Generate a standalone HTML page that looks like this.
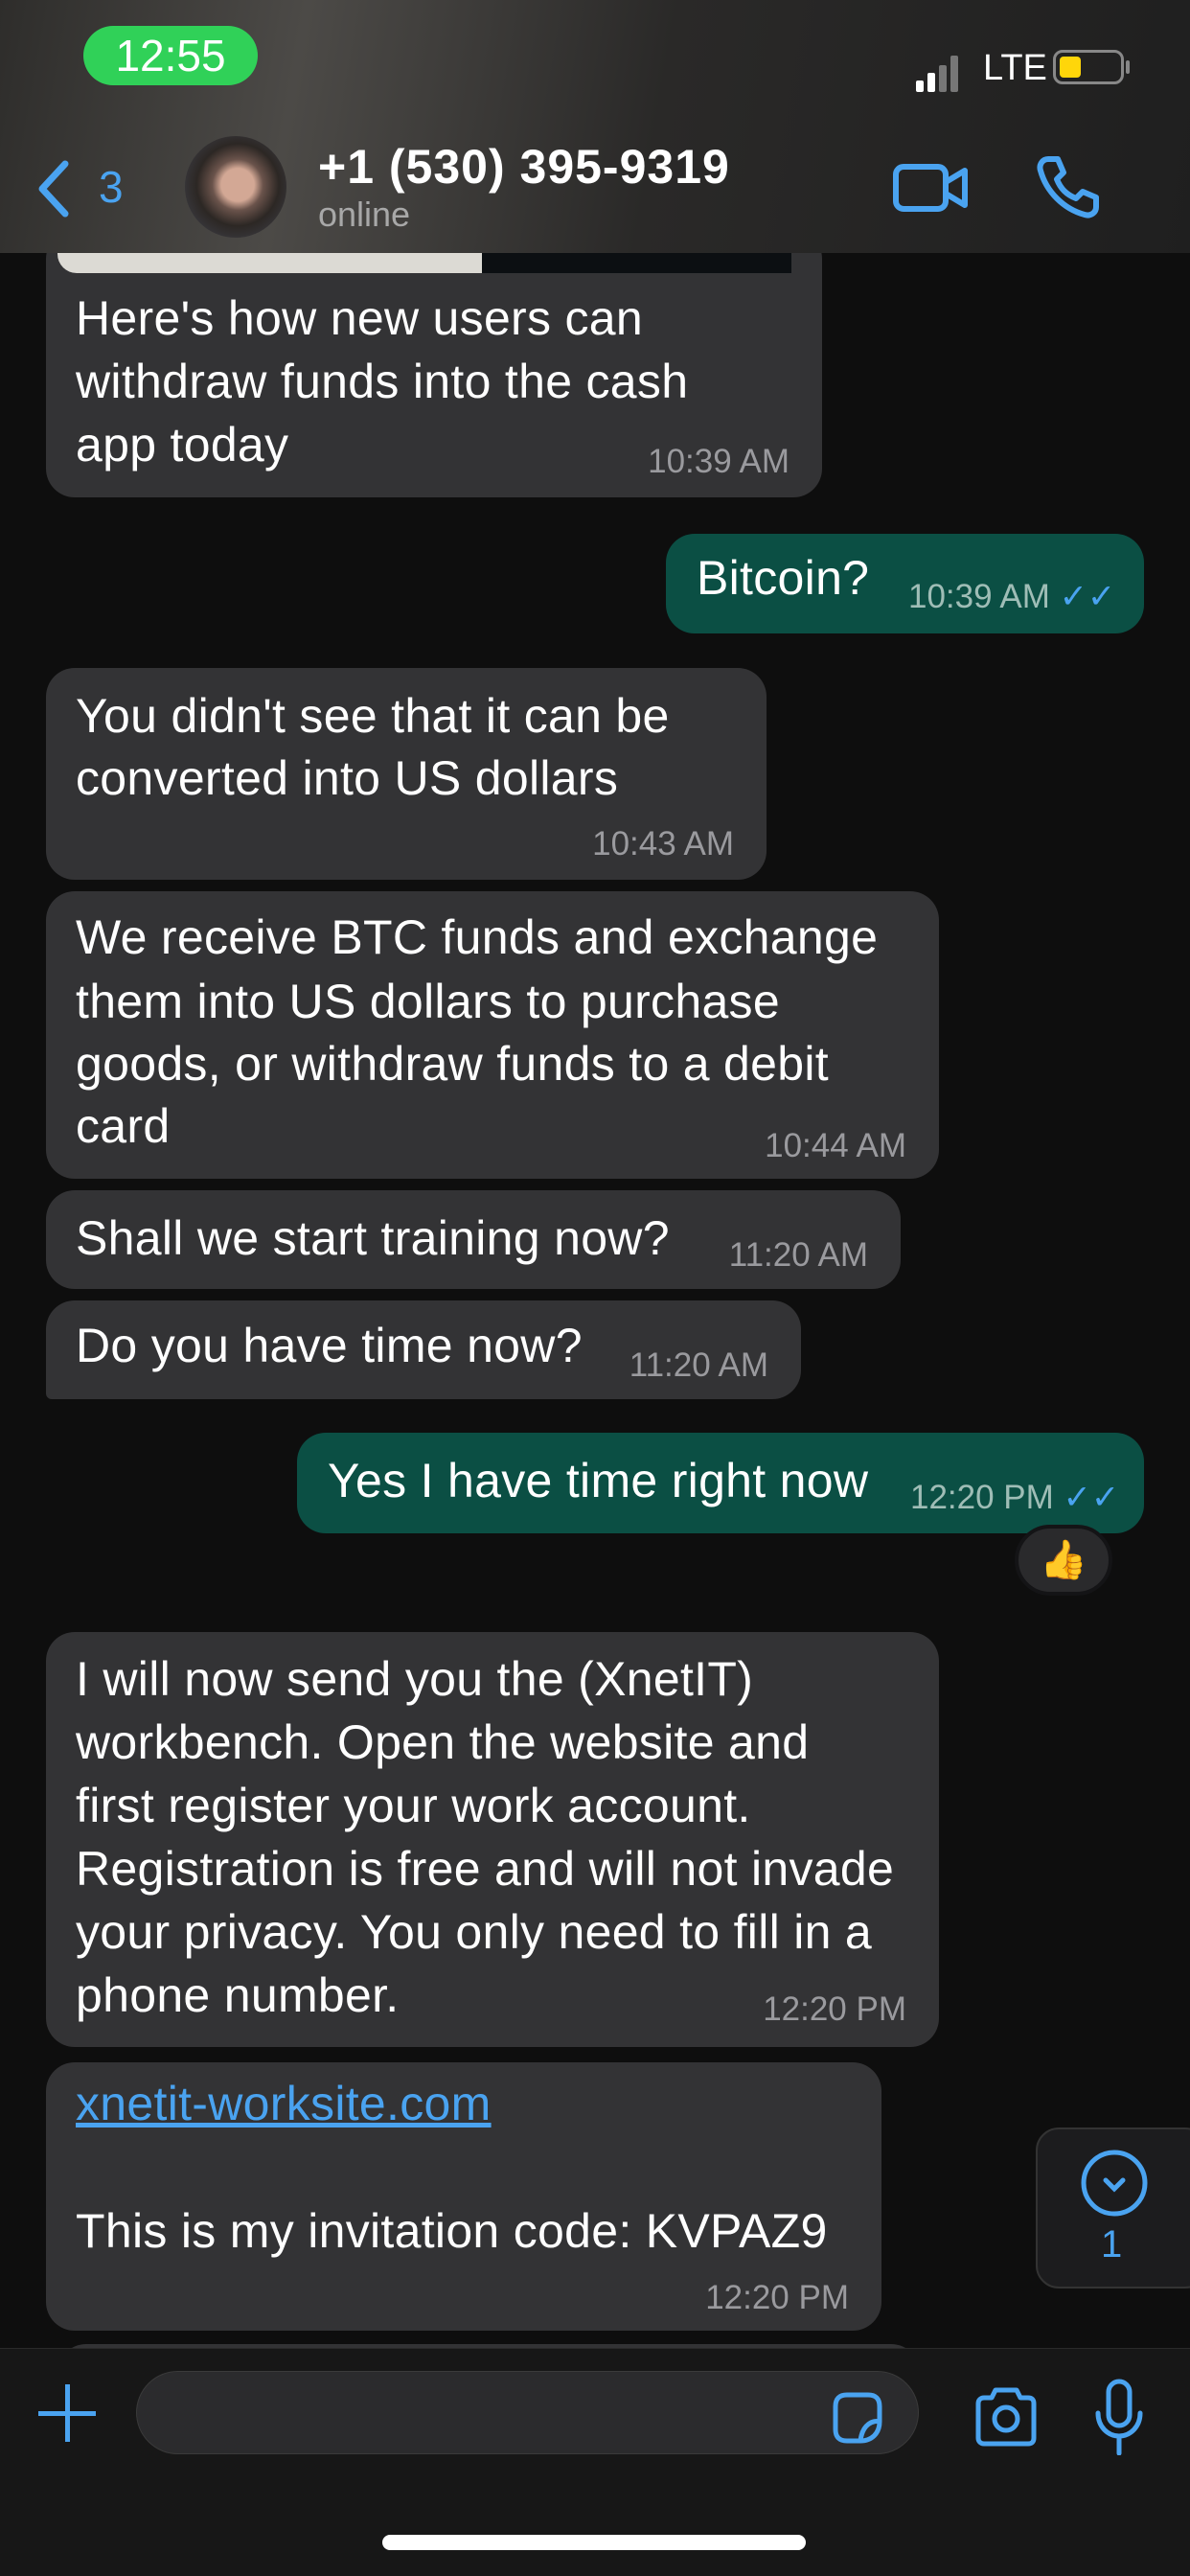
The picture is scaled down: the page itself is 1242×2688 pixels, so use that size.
<!DOCTYPE html>
<html><head><meta charset="utf-8"><style>
*{margin:0;padding:0;box-sizing:border-box}
body{width:1242px;height:2688px;background:#0e0e0e;position:relative;overflow:hidden;font-family:"Liberation Sans",sans-serif;color:#fff}
.a{position:absolute}
.b{position:absolute;background:#333335;border-radius:30px}
.o{background:#0b4f44}
.l{position:absolute;left:31px;font-size:50px;line-height:66px;white-space:nowrap;letter-spacing:0.3px}
.t{position:absolute;font-size:35px;color:#9a9a9e;white-space:nowrap;letter-spacing:0px}
.o .t{color:#9fbdb6}
</style></head><body>
<div class="b" style="left:48px;top:240px;width:810px;height:279px">
 <div class="a" style="left:12px;top:24px;width:443px;height:21px;background:#dcdad4;border-radius:0 0 0 20px"></div>
 <div class="a" style="left:455px;top:24px;width:323px;height:21px;background:#0c0f12"></div>
 <div class="l" style="top:59px">Here's how new users can</div>
 <div class="l" style="top:125px">withdraw funds into the cash</div>
 <div class="l" style="top:191px">app today</div>
 <div class="t" style="right:34px;top:222px">10:39 AM</div>
</div>
<div class="b o" style="left:695px;top:557px;width:499px;height:104px">
 <div class="l" style="top:13px;left:32px">Bitcoin?</div>
 <div class="t" style="left:253px;top:46px">10:39 AM <span style="color:#4aa3f0">✓✓</span></div>
</div>
<div class="b" style="left:48px;top:697px;width:752px;height:221px">
 <div class="l" style="top:17px">You didn't see that it can be</div>
 <div class="l" style="top:82px">converted into US dollars</div>
 <div class="t" style="right:34px;top:164px">10:43 AM</div>
</div>
<div class="b" style="left:48px;top:930px;width:932px;height:300px">
 <div class="l" style="top:15px">We receive BTC funds and exchange</div>
 <div class="l" style="top:82px">them into US dollars to purchase</div>
 <div class="l" style="top:147px">goods, or withdraw funds to a debit</div>
 <div class="l" style="top:212px">card</div>
 <div class="t" style="right:34px;top:246px">10:44 AM</div>
</div>
<div class="b" style="left:48px;top:1242px;width:892px;height:103px">
 <div class="l" style="top:17px">Shall we start training now?</div>
 <div class="t" style="right:34px;top:48px">11:20 AM</div>
</div>
<div class="b" style="left:48px;top:1357px;width:788px;height:103px;border-bottom-left-radius:6px">
 <div class="l" style="top:14px">Do you have time now?</div>
 <div class="t" style="right:34px;top:48px">11:20 AM</div>
</div>
<div class="b o" style="left:310px;top:1495px;width:884px;height:105px">
 <div class="l" style="top:17px;left:32px">Yes I have time right now</div>
 <div class="t" style="left:640px;top:48px">12:20 PM <span style="color:#4aa3f0">✓✓</span></div>
</div>
<div class="a" style="left:1059px;top:1591px;width:102px;height:74px;border-radius:37px;background:#2a2a2c;border:4px solid #141416;font-size:40px;text-align:center;line-height:66px">👍</div>
<div class="b" style="left:48px;top:1703px;width:932px;height:433px">
 <div class="l" style="top:16px">I will now send you the (XnetIT)</div>
 <div class="l" style="top:82px">workbench. Open the website and</div>
 <div class="l" style="top:148px">first register your work account.</div>
 <div class="l" style="top:214px">Registration is free and will not invade</div>
 <div class="l" style="top:280px">your privacy. You only need to fill in a</div>
 <div class="l" style="top:346px">phone number.</div>
 <div class="t" style="right:34px;top:374px">12:20 PM</div>
</div>
<div class="b" style="left:48px;top:2152px;width:872px;height:280px">
 <div class="l" style="top:10px;color:#4aa3f0;text-decoration:underline">xnetit-worksite.com</div>
 <div class="l" style="top:143px">This is my invitation code: KVPAZ9</div>
 <div class="t" style="right:34px;top:226px">12:20 PM</div>
</div>
<div class="b" style="left:60px;top:2446px;width:900px;height:60px"></div>
<div class="a" style="left:1081px;top:2220px;width:180px;height:168px;background:#1c1c1e;border:2px solid #333;border-radius:24px">
 <svg class="a" style="left:44px;top:20px" width="72" height="72" viewBox="0 0 72 72"><circle cx="36" cy="36" r="32" fill="none" stroke="#4aa3f0" stroke-width="5"/><path d="M27 33 L36 42 L45 33" fill="none" stroke="#4aa3f0" stroke-width="5" stroke-linecap="round"/></svg>
 <div class="a" style="left:66px;top:98px;font-size:40px;color:#4aa3f0">1</div>
</div>
<div class="a" style="left:0;top:0;width:1242px;height:264px;background:linear-gradient(100deg,#2e2d2b 0%,#4c4a47 25%,#2a2928 55%,#1f1f1f 100%)"></div>
<div class="a" style="left:87px;top:27px;width:182px;height:62px;background:#30d158;border-radius:31px;font-size:46px;text-align:center;line-height:62px;letter-spacing:0px">12:55</div>
<div class="a" style="left:956px;top:84px;width:8px;height:12px;background:#fff;border-radius:2px"></div>
<div class="a" style="left:968px;top:76px;width:8px;height:20px;background:#fff;border-radius:2px"></div>
<div class="a" style="left:980px;top:68px;width:8px;height:28px;background:#777;border-radius:2px"></div>
<div class="a" style="left:992px;top:58px;width:8px;height:38px;background:#777;border-radius:2px"></div>
<div class="a" style="left:1026px;top:50px;font-size:38px;letter-spacing:0px">LTE</div>
<div class="a" style="left:1099px;top:52px;width:74px;height:36px;border:3px solid #888;border-radius:10px"><div style="margin:4px;width:22px;height:22px;background:#ffd60a;border-radius:4px"></div></div>
<div class="a" style="left:1175px;top:63px;width:4px;height:14px;background:#888;border-radius:2px"></div>
<svg class="a" style="left:36px;top:165px" width="40" height="64" viewBox="0 0 40 64"><path d="M32 6 L8 32 L32 58" fill="none" stroke="#4aa3f0" stroke-width="7" stroke-linecap="round" stroke-linejoin="round"/></svg>
<div class="a" style="left:103px;top:168px;font-size:46px;color:#4aa3f0">3</div>
<div class="a" style="left:193px;top:142px;width:106px;height:106px;border-radius:50%;background:radial-gradient(ellipse at 52% 48%,#d3a895 0 22%,#6a534b 34%,#2c2724 55%,#3a3a40 80%)"></div>
<div class="a" style="left:332px;top:145px;font-size:50px;font-weight:bold;letter-spacing:1px">+1 (530) 395-9319</div>
<div class="a" style="left:332px;top:203px;font-size:36px;color:#a8a8a8">online</div>
<svg class="a" style="left:932px;top:168px" width="80" height="56" viewBox="0 0 80 56"><rect x="3" y="6" width="52" height="44" rx="8" fill="none" stroke="#4aa3f0" stroke-width="6"/><path d="M55 22 L75 10 L75 46 L55 34" fill="none" stroke="#4aa3f0" stroke-width="6" stroke-linejoin="round"/></svg>
<svg class="a" style="left:1080px;top:160px" width="70" height="70" viewBox="0 0 70 70"><path d="M14 6 L24 6 L30 20 L23 27 C27 37 33 43 43 47 L50 40 L64 46 L64 56 C64 62 58 66 52 64 C30 58 12 40 6 18 C4 12 8 6 14 6Z" fill="none" stroke="#4aa3f0" stroke-width="6" stroke-linejoin="round"/></svg>
<div class="a" style="left:0;top:2450px;width:1242px;height:238px;background:#171717;border-top:1px solid #2a2a2a"></div>
<div class="a" style="left:40px;top:2516px;width:60px;height:5px;background:#4aa3f0"></div>
<div class="a" style="left:68px;top:2488px;width:5px;height:60px;background:#4aa3f0"></div>
<div class="a" style="left:142px;top:2474px;width:817px;height:87px;background:#2b2b2d;border:1px solid #3a3a3a;border-radius:44px"></div>
<svg class="a" style="left:868px;top:2495px" width="56" height="56" viewBox="0 0 56 56"><path d="M16 4 H38 C46 4 50 8 50 16 V32 C50 44 42 52 30 52 H16 C8 52 4 48 4 40 V16 C4 8 8 4 16 4Z M50 32 C44 30 32 34 30 52" fill="none" stroke="#4aa3f0" stroke-width="5" stroke-linejoin="round"/></svg>
<svg class="a" style="left:1015px;top:2490px" width="70" height="64" viewBox="0 0 70 64"><path d="M6 18 C6 14 9 12 12 12 H20 L24 4 H46 L50 12 H58 C62 12 64 14 64 18 V54 C64 58 62 60 58 60 H12 C9 60 6 58 6 54Z" fill="none" stroke="#4aa3f0" stroke-width="5" stroke-linejoin="round"/><circle cx="35" cy="34" r="12" fill="none" stroke="#4aa3f0" stroke-width="5"/></svg>
<svg class="a" style="left:1140px;top:2482px" width="56" height="80" viewBox="0 0 56 80"><rect x="17" y="3" width="22" height="46" rx="11" fill="none" stroke="#4aa3f0" stroke-width="5"/><path d="M6 36 C6 50 16 60 28 60 C40 60 50 50 50 36 M28 60 V78" fill="none" stroke="#4aa3f0" stroke-width="5" stroke-linecap="round"/></svg>
<div class="a" style="left:399px;top:2645px;width:442px;height:16px;background:#fff;border-radius:8px"></div>
</body></html>
